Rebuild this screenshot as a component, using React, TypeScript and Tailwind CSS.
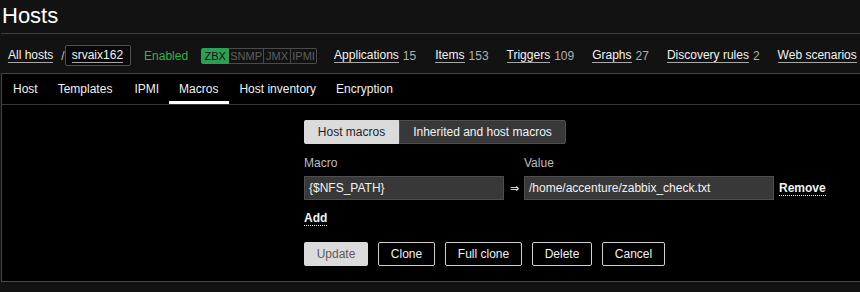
import React from "react";

const font = { fontFamily: '"Liberation Sans", Arial, sans-serif' };

function NavLink({ label, count }: { label: string; count?: string }) {
  return (
    <div className="flex items-center">
      <span className="leading-[14px] text-[#f2f2f2] border-b border-[#a8a8a8]">{label}</span>
      {count && <span className="ml-[4px] leading-[14px] text-[#b0b0b0]">{count}</span>}
    </div>
  );
}

export default function App() {
  const tabs = [
    { t: "Host", c: "px-[10px]" },
    { t: "Templates", c: "pl-[10px] pr-[12px]" },
    { t: "IPMI", c: "px-[10px]" },
    { t: "Macros", c: "px-[10px] pr-[11px]" },
    { t: "Host inventory", c: "px-[10px]" },
    { t: "Encryption", c: "px-[10px]" },
  ];
  return (
    <div style={font} className="w-[860px] h-[292px] bg-[#121212] text-[12px] text-[#f2f2f2] overflow-hidden flex flex-col">
      <div className="h-[34px] shrink-0 border-b border-[#3e3e3e] ml-[1px] pl-[1px] pt-[5px]">
        <div className="text-[22px] leading-[22px] text-white">Hosts</div>
      </div>

      <div className="h-[39px] shrink-0 pt-[4px] flex items-center whitespace-nowrap">
        <div className="ml-[8px]">
          <NavLink label="All hosts" />
        </div>
        <span className="ml-[8px] text-[#bfbfbf] leading-[14px]">/</span>
        <div className="ml-[0px] h-[21px] pl-[6px] pr-[7px] flex items-center border border-[#505050] rounded-[2px] bg-[#080808]">
          <NavLink label="srvaix162" />
        </div>
        <span className="ml-[13px] text-[#34b24a] leading-[14px]">Enabled</span>
        <div className="ml-[13px] flex h-[16px] text-[11px] leading-[14px]">
          <span className="w-[28px] flex items-center justify-center bg-[#2f9e55] text-[#0f0f0f] border border-[#2f9e55] rounded-l-[2px]">ZBX</span>
          <span className="w-[35px] flex items-center justify-center text-[#5e5e5e] border border-[#4a4a4a] border-l-0">SNMP</span>
          <span className="w-[27px] flex items-center justify-center text-[#5e5e5e] border border-[#4a4a4a] border-l-0">JMX</span>
          <span className="w-[26px] flex items-center justify-center text-[#5e5e5e] border border-[#4a4a4a] border-l-0 rounded-r-[2px]">IPMI</span>
        </div>
        <div className="ml-[17px] flex items-center">
          <NavLink label="Applications" count="15" />
          <div className="ml-[19px]"><NavLink label="Items" count="153" /></div>
          <div className="ml-[18px]"><NavLink label="Triggers" count="109" /></div>
          <div className="ml-[18px]"><NavLink label="Graphs" count="27" /></div>
          <div className="ml-[18px]"><NavLink label="Discovery rules" count="2" /></div>
          <div className="ml-[18px]"><NavLink label="Web scenarios" /></div>
        </div>
      </div>

      <div className="h-[209px] shrink-0 ml-[1px] border-l border-t border-b border-[#444] bg-black flex flex-col">
        <div className="h-[31px] shrink-0 border-b border-[#383838] flex pl-[1px]">
          {tabs.map(({ t, c }) => (
            <div
              key={t}
              className={
                "h-[30px] pt-[8px] leading-[14px] border-b-[3px] " +
                c +
                " " +
                (t === "Macros" ? "border-white" : "border-transparent")
              }
            >
              {t}
            </div>
          ))}
        </div>

        <div className="pl-[302px] pt-[15px] flex flex-col items-start">
          <div className="flex h-[24px] leading-[14px]">
            <div className="w-[95px] flex items-center justify-center bg-[#dbdbdb] text-[#1f1f1f] rounded-l-[2px]">
              Host macros
            </div>
            <div className="w-[167px] flex items-center justify-center bg-[#383838] text-[#f2f2f2] border border-[#4f4f4f] rounded-r-[2px]">
              Inherited and host macros
            </div>
          </div>

          <div className="mt-[12px] flex leading-[14px] text-[#bfbfbf]">
            <span className="w-[220px]">Macro</span>
            <span>Value</span>
          </div>

          <div className="mt-[6px] flex items-center h-[24px]">
            <div className="w-[200px] h-[24px] bg-[#383838] border border-[#4f4f4f] flex items-center pl-[4px] leading-[14px]">
              {"{$NFS_PATH}"}
            </div>
            <span className="w-[20px] text-center text-[11px] text-[#f2f2f2]">⇒</span>
            <div className="w-[250px] h-[24px] bg-[#383838] border border-[#4f4f4f] flex items-center pl-[4px] leading-[14px]">
              /home/accenture/zabbix_check.txt
            </div>
            <span className="ml-[5px] font-bold leading-[14px] border-b border-dotted border-[#f2f2f2]">Remove</span>
          </div>

          <span className="mt-[11px] font-bold leading-[14px] border-b border-dotted border-[#f2f2f2]">Add</span>

          <div className="mt-[16px] flex gap-[10px] h-[24px] leading-[14px]">
            <div className="w-[64px] justify-center flex items-center bg-[#dbdbdb] text-[#5c5c5c] rounded-[2px]">Update</div>
            <div className="w-[57px] justify-center flex items-center border border-[#cfcfcf] rounded-[2px]">Clone</div>
            <div className="w-[77px] justify-center flex items-center border border-[#cfcfcf] rounded-[2px]">Full clone</div>
            <div className="w-[60px] justify-center flex items-center border border-[#cfcfcf] rounded-[2px]">Delete</div>
            <div className="w-[63px] justify-center flex items-center border border-[#cfcfcf] rounded-[2px]">Cancel</div>
          </div>
        </div>
      </div>
    </div>
  );
}
